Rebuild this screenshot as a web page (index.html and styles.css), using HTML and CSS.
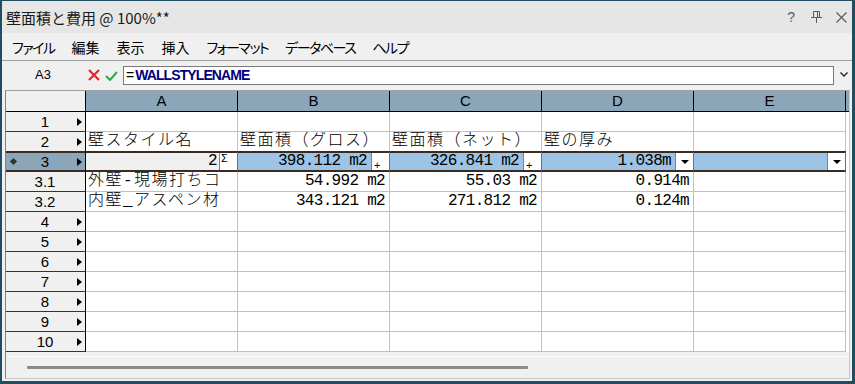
FILE: index.html
```html
<!DOCTYPE html>
<html lang="ja">
  <head>
    <meta charset="UTF-8" />
    <title>壁面積と費用</title>
    <link rel="stylesheet" href="styles.css">
  </head>
  <body>
    <div class="window">
      <div class="titlebar">
        <span class="title">壁面積と費用 @ 100%**</span>
        <div class="tools">
          <span class="help">?</span>
          <svg width="11" height="12" viewBox="0 0 11 12"><path d="M2.5 0.5h6v6h-6z M6.5 0.5v6 M0 6.5h11 M5.5 6.5v5.5" stroke="#5c5c5c" fill="none"/></svg>
          <svg width="11" height="11" viewBox="0 0 11 11"><path d="M0.5 0.5l10 10M10.5 0.5l-10 10" stroke="#5c5c5c" stroke-width="1.2"/></svg>
        </div>
      </div>
      <div class="menubar">
        <span class="kana">ファイル</span>
        <span>編集</span>
        <span>表示</span>
        <span>挿入</span>
        <span class="kana">フォーマット</span>
        <span class="kana">データベース</span>
        <span class="kana">ヘルプ</span>
      </div>
      <div class="formulabar">
        <div class="cellref">A3</div>
        <svg class="btn-x" width="12" height="12" viewBox="0 0 12 12"><path d="M1 1l10 10M11 1l-10 10" stroke="#e3262f" stroke-width="2.2"/></svg>
        <svg class="btn-ok" width="13" height="10" viewBox="0 0 13 10"><path d="M1 5l4 4l7-8" stroke="#25ad45" stroke-width="2" fill="none"/></svg>
        <div class="fx-input"><span class="eq">=</span><b>WALLSTYLENAME</b></div>
        <svg class="chev" width="8" height="5" viewBox="0 0 8 5"><path d="M0.5 0.5l3.5 3.5l3.5-3.5" stroke="#222" stroke-width="1.4" fill="none"/></svg>
      </div>
      <div class="sheet">
        <div class="grid">
          <div class="corner"></div>
          <div class="ch">A</div><div class="ch">B</div><div class="ch">C</div><div class="ch">D</div><div class="ch">E</div>

          <div class="rh"><span class="rn">1</span><i class="tri"></i></div>
          <div class="c"></div><div class="c"></div><div class="c"></div><div class="c"></div><div class="c"></div>

          <div class="rh r2"><span class="rn">2</span><i class="tri"></i></div>
          <div class="c t r2">壁スタイル名</div><div class="c t r2">壁面積（グロス）</div><div class="c t r2">壁面積（ネット）</div><div class="c t r2">壁の厚み</div><div class="c r2"></div>

          <div class="rh sel"><i class="mark"></i><span class="rn">3</span><i class="tri"></i></div>
          <div class="c sel edit"><span class="v">2</span><span class="box sum">Σ</span></div>
          <div class="c sel"><span class="v">398.112 m2</span><span class="box plus">+</span></div>
          <div class="c sel"><span class="v">326.841 m2</span><span class="box plus">+</span></div>
          <div class="c sel"><span class="v">1.038m</span><span class="box drop"><i></i></span></div>
          <div class="c sel"><span class="box drop"><i></i></span></div>

          <div class="rh"><span class="rn">3.1</span><i class="tri blank"></i></div>
          <div class="c t">外壁-現場打ちコ</div><div class="c num">54.992 m2</div><div class="c num">55.03 m2</div><div class="c num">0.914m</div><div class="c"></div>

          <div class="rh"><span class="rn">3.2</span><i class="tri blank"></i></div>
          <div class="c t">内壁_アスペン材</div><div class="c num">343.121 m2</div><div class="c num">271.812 m2</div><div class="c num">0.124m</div><div class="c"></div>

          <div class="rh"><span class="rn">4</span><i class="tri"></i></div>
          <div class="c"></div><div class="c"></div><div class="c"></div><div class="c"></div><div class="c"></div>
          <div class="rh"><span class="rn">5</span><i class="tri"></i></div>
          <div class="c"></div><div class="c"></div><div class="c"></div><div class="c"></div><div class="c"></div>
          <div class="rh"><span class="rn">6</span><i class="tri"></i></div>
          <div class="c"></div><div class="c"></div><div class="c"></div><div class="c"></div><div class="c"></div>
          <div class="rh"><span class="rn">7</span><i class="tri"></i></div>
          <div class="c"></div><div class="c"></div><div class="c"></div><div class="c"></div><div class="c"></div>
          <div class="rh"><span class="rn">8</span><i class="tri"></i></div>
          <div class="c"></div><div class="c"></div><div class="c"></div><div class="c"></div><div class="c"></div>
          <div class="rh"><span class="rn">9</span><i class="tri"></i></div>
          <div class="c"></div><div class="c"></div><div class="c"></div><div class="c"></div><div class="c"></div>
          <div class="rh"><span class="rn">10</span><i class="tri"></i></div>
          <div class="c"></div><div class="c"></div><div class="c"></div><div class="c"></div><div class="c"></div>
        </div>
        <div class="hscroll">
          <div class="track"><div class="thumb"></div></div>
        </div>
      </div>
    </div>
  </body>
</html>
```

FILE: styles.css
```css
* {
  box-sizing: border-box;
}

body {
  margin: 0;
  background: #ffffff;
  font-family: "Noto Sans CJK JP", "Noto Sans", sans-serif;
}

.window {
  width: 855px;
  height: 384px;
  border-style: solid;
  border-color: #1f4d61;
  border-width: 1px 3px 3px 2px;
  background: #f0f0f0;
  display: flex;
  flex-direction: column;
  overflow: hidden;
}

/* title */
.titlebar {
  height: 32px;
  flex: none;
  background: #e6e6e6;
  display: flex;
  align-items: center;
  justify-content: space-between;
  padding: 0 5px 0 4px;
}
.title {
  font-size: 15px;
  color: #1a1a1a;
}
.tools {
  display: flex;
  align-items: center;
  gap: 14px;
}
.help {
  font-family: "Liberation Sans", sans-serif;
  font-size: 14px;
  color: #5c5c5c;
  margin-right: 2px;
}

/* menu */
.menubar {
  height: 27px;
  flex: none;
  display: flex;
  align-items: center;
  padding-left: 10px;
  font-size: 14px;
  font-feature-settings: "palt";
  color: #000;
}
.menubar span {
  margin-right: 17px;
}
.menubar .kana {
  letter-spacing: -1.5px;
}

/* formula bar */
.formulabar {
  height: 30px;
  flex: none;
  border-top: 1px solid #a0a0a0;
  display: flex;
  align-items: center;
}
.cellref {
  width: 82px;
  text-align: center;
  font-family: "Liberation Sans", sans-serif;
  font-size: 13px;
  margin-top: -2px;
}
.btn-x {
  margin-left: 4px;
  margin-top: -2px;
}
.btn-ok {
  margin-left: 5px;
}
.fx-input {
  width: 711px;
  height: 19px;
  margin-left: 5px;
  border: 1px solid #7a7a7a;
  background: #fff;
  padding-left: 2px;
  font-family: "Liberation Sans", sans-serif;
  font-size: 14px;
  line-height: 17px;
}
.fx-input .eq {
  margin-right: 1px;
}
.fx-input b {
  color: #000080;
  letter-spacing: -0.9px;
}
.chev {
  margin-left: 6px;
  margin-top: -3px;
}

/* sheet */
.sheet {
  width: 845px;
  height: 289px;
  margin: 0 0 2px 3px;
  flex: none;
  border: 1px solid;
  border-color: #a0a0a0 #c8c8c8 #c8c8c8 #808080;
  background: #fff;
}
.grid {
  width: 843px;
  display: grid;
  grid-template-columns: 80px repeat(5, 152px);
  grid-template-rows: 21px 20px 19px 21px repeat(9, 20px);
  background: linear-gradient(#8ba5b9 0 20px, #000 20px 21px, #fff 21px);
}
.corner {
  background: #f0f0f0;
  border-right: 1px solid #000;
  border-bottom: 1px solid #000;
}
.ch {
  background: #8ba5b9;
  border-right: 1px solid #000;
  border-bottom: 1px solid #000;
  text-align: center;
  font-family: "Liberation Sans", sans-serif;
  font-size: 15px;
  line-height: 20px;
}
.rh {
  background: #f0f0f0;
  border-right: 1px solid #000;
  border-bottom: 1px solid #333;
  display: flex;
  align-items: center;
  padding-left: 7px;
  font-family: "Liberation Sans", sans-serif;
  font-size: 15px;
}
.rn {
  flex: 1;
  text-align: center;
}
.tri {
  width: 0;
  height: 0;
  border-left: 5px solid #000;
  border-top: 4px solid transparent;
  border-bottom: 4px solid transparent;
  margin-right: 3px;
}
.tri.blank {
  visibility: hidden;
}
.mark {
  width: 5px;
  height: 5px;
  background: #333;
  transform: rotate(45deg);
  margin: 0 -3px 0 -2px;
}

.c {
  background: #fff;
  border-right: 1px solid #c0c0c0;
  border-bottom: 1px solid #c0c0c0;
  font-family: "Liberation Mono", "Noto Sans CJK JP", monospace;
  font-size: 16px;
  line-height: 19px;
  white-space: nowrap;
  overflow: hidden;
  padding: 0 4px 0 2px;
}
.c.t {
  letter-spacing: 1.5px;
  font-weight: 300;
}
.c.num {
  text-align: right;
  letter-spacing: -0.7px;
}
.r2 {
  border-bottom: 0;
}

/* selected row */
.sel {
  border-top: 2px solid #3a2b20;
  border-bottom: 2px solid #3a2b20;
}
.rh.sel {
  background: #8ba5b9;
}
.c.sel {
  background: #9dc3e6;
  border-right-color: #6e6e6e;
  display: flex;
  justify-content: flex-end;
  padding: 0;
  line-height: 17px;
  letter-spacing: -0.7px;
}
.c.sel.edit {
  background: #f0f0f0;
}
.v {
  padding-right: 4px;
}
.edit .v {
  padding-right: 2px;
}
.box {
  width: 18px;
  flex: none;
  background: #fff;
  border-left: 1px solid #808080;
  font-family: "Liberation Sans", sans-serif;
  letter-spacing: 0;
}
.sum {
  font-size: 11px;
  line-height: 11px;
  padding-left: 1px;
}
.plus {
  font-size: 11px;
  line-height: 11px;
  padding: 7px 0 0 2px;
}
.drop {
  display: flex;
  align-items: center;
  justify-content: center;
}
.drop i {
  width: 0;
  height: 0;
  border-top: 4px solid #000;
  border-left: 4px solid transparent;
  border-right: 4px solid transparent;
}

/* scrollbar */
.hscroll {
  height: 26px;
  background: #f0f0f0;
  padding-top: 4px;
}
.track {
  border-top: 1px solid #fcfcfc;
  padding-top: 9px;
}
.thumb {
  width: 501px;
  height: 3px;
  margin-left: 21px;
  background: #8a8a8a;
  border-radius: 1px;
}
```
